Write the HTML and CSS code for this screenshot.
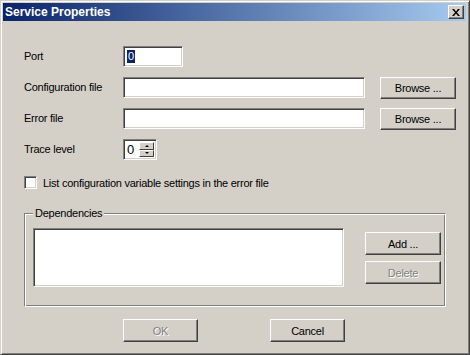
FILE: index.html
```html
<!DOCTYPE html>
<html lang="en">

<head>
  <meta charset="UTF-8">
  <title>Service Properties</title>
  <link rel="stylesheet" href="styles.css">
</head>

<body>
  <div class="window">
    <div class="titlebar">
      <span class="title">Service Properties</span>
      <button class="close-btn">
        <svg width="8" height="7" viewBox="0 0 8 7">
          <path d="M0 0h2l2 2.5L6 0h2L5 3.5 8 7H6L4 4.5 2 7H0l3-3.5z" fill="#000"/>
        </svg>
      </button>
    </div>

    <div class="content">
      <div class="form-grid">
        <label class="label">Port</label>
        <div class="field port-field"><span class="selected">0</span></div>
        <span></span>
        <span></span>

        <label class="label">Configuration file</label>
        <div class="field"></div>
        <span></span>
        <button class="btn">Browse ...</button>

        <label class="label">Error file</label>
        <div class="field"></div>
        <span></span>
        <button class="btn">Browse ...</button>

        <label class="label">Trace level</label>
        <div class="spinner">
          <div class="spin-value">0</div>
          <div class="spin-buttons">
            <div class="spin-btn"><span class="arrow-up"></span></div>
            <div class="spin-btn"><span class="arrow-down"></span></div>
          </div>
        </div>
        <span></span>
        <span></span>
      </div>

      <div class="check-row">
        <span class="checkbox"></span>
        <span>List configuration variable settings in the error file</span>
      </div>

      <div class="group">
        <span class="group-caption">Dependencies</span>
        <div class="listbox"></div>
        <div class="group-buttons">
          <button class="btn">Add ...</button>
          <button class="btn disabled">Delete</button>
        </div>
      </div>

      <div class="bottom-buttons">
        <button class="btn disabled">OK</button>
        <button class="btn">Cancel</button>
      </div>
    </div>
  </div>
</body>

</html>
```

FILE: styles.css
```css
/* Classic dialog window */
body {
  margin: 0;
  background: #d4d0c8;
  font-family: "Liberation Sans", Arial, sans-serif;
  font-size: 11px;
  letter-spacing: -0.25px;
  color: #000;
}

.window {
  width: 470px;
  height: 355px;
  box-sizing: border-box;
  background: #d4d0c8;
  border: 1px solid;
  border-color: #d4d0c8 #404040 #404040 #d4d0c8;
  box-shadow: inset 1px 1px 0 #fff, inset -1px -1px 0 #808080;
  padding: 2px 3px 3px 2px;
}

.titlebar {
  height: 18px;
  display: flex;
  align-items: center;
  justify-content: space-between;
  padding: 0 2px 0 2px;
  background: linear-gradient(to right, #0a246a, #a6caf0);
}

.title {
  color: #fff;
  font-weight: bold;
  font-size: 12px;
  letter-spacing: 0;
}

.close-btn {
  width: 16px;
  height: 14px;
  padding: 0;
  display: flex;
  align-items: center;
  justify-content: center;
  background: #d4d0c8;
  border: 1px solid;
  border-color: #fff #404040 #404040 #fff;
  box-shadow: inset -1px -1px 0 #808080;
}

.content {
  padding: 25px 0 0 21px;
}

/* Label / field rows */
.form-grid {
  display: grid;
  grid-template-columns: 99px 242px 15px 76px;
  grid-auto-rows: 21px;
  row-gap: 10px;
  align-items: center;
}

.label {
  line-height: 21px;
}

.field {
  height: 21px;
  box-sizing: border-box;
  background: #fff;
  border: 1px solid;
  border-color: #808080 #fff #fff #808080;
  box-shadow: inset 1px 1px 0 #404040, inset -1px -1px 0 #d4d0c8;
}

.port-field {
  width: 60px;
  padding: 3px 0 0 3px;
}

.selected {
  display: inline-block;
  background: #0a246a;
  color: #fff;
  line-height: 13px;
  padding: 0 1px;
}

.btn {
  height: 22px;
  box-sizing: border-box;
  font-family: "Liberation Sans", Arial, sans-serif;
  font-size: 11px;
  letter-spacing: -0.25px;
  color: #000;
  background: #d4d0c8;
  border: 1px solid;
  border-color: #fff #404040 #404040 #fff;
  box-shadow: inset -1px -1px 0 #808080;
  padding: 0;
}

.btn.disabled {
  color: #808080;
  text-shadow: 1px 1px 0 #fff;
}

/* Trace level spinner */
.spinner {
  width: 34px;
  height: 21px;
  box-sizing: border-box;
  display: flex;
  background: #fff;
  border: 1px solid;
  border-color: #808080 #fff #fff #808080;
  box-shadow: inset 1px 1px 0 #404040, inset -1px -1px 0 #d4d0c8;
  padding: 2px;
}

.spin-value {
  flex: 1;
  padding-left: 1px;
  font-size: 13px;
  line-height: 16px;
}

.spin-buttons {
  width: 15px;
  display: flex;
  flex-direction: column;
}

.spin-btn {
  flex: 1;
  display: flex;
  align-items: center;
  justify-content: center;
  background: #d4d0c8;
  border: 1px solid;
  border-color: #fff #404040 #404040 #fff;
}

.arrow-up {
  border-left: 2px solid transparent;
  border-right: 2px solid transparent;
  border-bottom: 2px solid #000;
}

.arrow-down {
  border-left: 2px solid transparent;
  border-right: 2px solid transparent;
  border-top: 2px solid #000;
}

/* Checkbox */
.check-row {
  display: flex;
  align-items: center;
  gap: 6px;
  margin-top: 16px;
  height: 13px;
}

.checkbox {
  width: 13px;
  height: 13px;
  box-sizing: border-box;
  background: #fff;
  border: 1px solid;
  border-color: #808080 #fff #fff #808080;
  box-shadow: inset 1px 1px 0 #404040, inset -1px -1px 0 #d4d0c8;
}

/* Dependencies group */
.group {
  position: relative;
  width: 422px;
  height: 94px;
  box-sizing: border-box;
  margin-top: 24px;
  border: 1px solid;
  border-color: #808080 #fff #fff #808080;
  box-shadow: inset 1px 1px 0 #fff, inset -1px -1px 0 #808080;
  display: flex;
  padding: 14px 4px 0 8px;
}

.group-caption {
  position: absolute;
  top: -7px;
  left: 8px;
  padding: 0 2px;
  background: #d4d0c8;
  line-height: 13px;
}

.listbox {
  width: 311px;
  height: 59px;
  box-sizing: border-box;
  background: #fff;
  border: 1px solid;
  border-color: #808080 #fff #fff #808080;
  box-shadow: inset 1px 1px 0 #404040, inset -1px -1px 0 #d4d0c8;
}

.group-buttons {
  margin-left: 21px;
  padding-top: 4px;
  display: flex;
  flex-direction: column;
  gap: 6px;
}

.group-buttons .btn {
  width: 76px;
  height: 23px;
}

.bottom-buttons {
  display: flex;
  gap: 72px;
  margin: 12px 0 0 99px;
}

.bottom-buttons .btn {
  width: 75px;
  height: 23px;
}
```
